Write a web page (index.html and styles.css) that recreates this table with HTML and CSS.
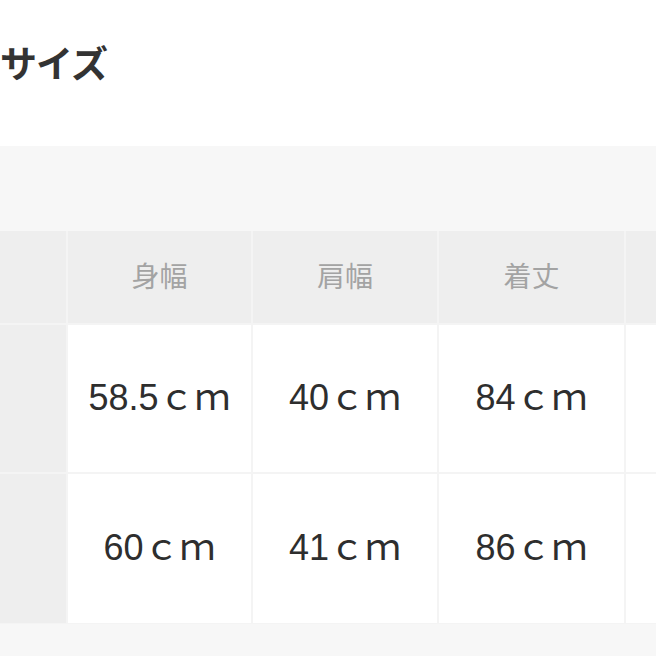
FILE: index.html
```html
<!DOCTYPE html>
<html lang="ja">
<head>
<meta charset="utf-8">
<link rel="stylesheet" href="styles.css">
</head>
<body>
<div class="page">
  <h2 class="title">サイズ</h2>
  <div class="panel">
    <div class="size-table">
      <div class="cell side"></div>
      <div class="cell head">身幅</div>
      <div class="cell head">肩幅</div>
      <div class="cell head">着丈</div>
      <div class="cell head"></div>

      <div class="cell side"></div>
      <div class="cell data">58.5ｃｍ</div>
      <div class="cell data">40ｃｍ</div>
      <div class="cell data">84ｃｍ</div>
      <div class="cell data"></div>

      <div class="cell side"></div>
      <div class="cell data">60ｃｍ</div>
      <div class="cell data">41ｃｍ</div>
      <div class="cell data">86ｃｍ</div>
      <div class="cell data"></div>
    </div>
  </div>
</div>
</body>
</html>
```

FILE: styles.css
```css
html, body {
  margin: 0;
  padding: 0;
  background: #ffffff;
  overflow: hidden;
}

.page {
  width: 656px;
  height: 656px;
  overflow: hidden;
  font-family: "Noto Sans CJK JP", "Noto Sans", sans-serif;
}

.title {
  margin: 0;
  padding-top: 39px;
  height: 46px;
  line-height: 46px;
  font-size: 37px;
  font-weight: 700;
  color: #333333;
  letter-spacing: -1px;
}

.panel {
  margin-top: 61px;
  background: #f7f7f7;
  padding-top: 85px;
  padding-bottom: 40px;
}

.size-table {
  display: grid;
  grid-template-columns: 66px 183px 184px 185px 1fr;
  grid-template-rows: 92px 147px 149px;
  gap: 2px;
  background: #f4f4f4;
  border-bottom: 1px solid #f4f4f4;
}

.cell {
  display: flex;
  align-items: center;
  justify-content: center;
  line-height: 1;
}

.side {
  background: #eeeeee;
}

.head {
  background: #eeeeee;
  color: #a3a3a3;
  font-size: 28px;
  padding-bottom: 4px;
}

.data {
  background: #ffffff;
  color: #2e2e2e;
  font-family: "Liberation Sans", "Noto Sans CJK JP", sans-serif;
  font-size: 36px;
  padding-bottom: 2px;
}
```
